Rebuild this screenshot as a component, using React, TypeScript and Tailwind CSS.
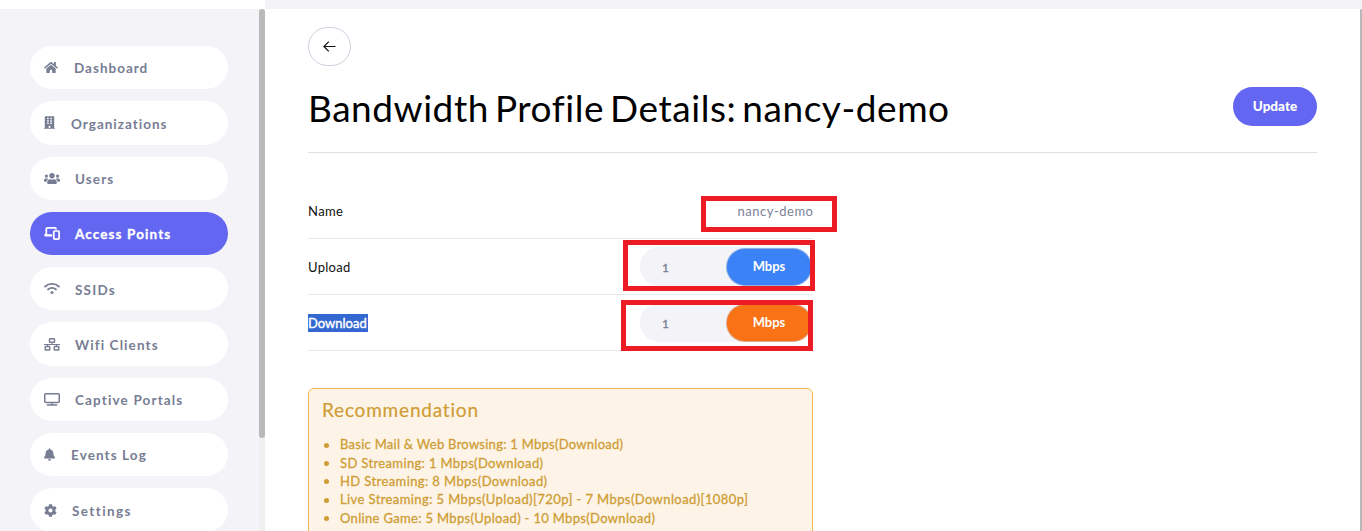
import React from "react";
import { FaHome, FaBuilding, FaUsers, FaBell, FaCog } from "react-icons/fa";

function Devices() {
  return (
    <svg width="16" height="13" viewBox="0 0 16 13" fill="none" stroke="currentColor" strokeWidth="1.800">
      <path d="M2.300 8V1.900Q2.300 .9 3.300 .9H11Q12 .9 12 1.900V2.500" />
      <path d="M0 7.300H8.200V9.600H1.600Q0 9.400 0 7.300Z" fill="currentColor" stroke="none" />
      <rect x="9.800" y="4" width="5.300" height="8.100" rx=".8" strokeWidth="1.700" />
    </svg>
  );
}

function Wifi() {
  return (
    <svg width="16" height="13" viewBox="0 0 16 13" fill="none" stroke="currentColor" strokeWidth="1.800" strokeLinecap="round">
      <path d="M1.100 4.500C4.800 .9 11.200 .9 14.900 4.500M4 7.500C6.200 5.400 9.800 5.400 12 7.500" />
      <circle cx="8" cy="10.600" r="1.500" fill="currentColor" stroke="none" />
    </svg>
  );
}

function Network() {
  return (
    <svg width="16" height="13" viewBox="0 0 16 13" fill="none" stroke="currentColor" strokeWidth="1.500">
      <rect x="5.500" y=".8" width="5" height="3.500" rx=".5" />
      <rect x="1.300" y="8.500" width="4.400" height="3.600" rx=".5" />
      <rect x="10.300" y="8.500" width="4.400" height="3.600" rx=".5" />
      <path d="M0 6.500H16M8 4.400V6.500M3.500 6.500V8.400M12.500 6.500V8.400" strokeWidth="1.100" />
    </svg>
  );
}

function Screen() {
  return (
    <svg width="16" height="13" viewBox="0 0 16 13" fill="none" stroke="currentColor" strokeWidth="1.500">
      <rect x=".75" y=".75" width="14.500" height="8.700" rx="1" />
      <path d="M3.300 11.900H12.700" strokeLinecap="round" />
      <path d="M8 9.500V12" strokeWidth="1.500" />
    </svg>
  );
}

const items = [
  { label: "Dashboard", icon: <FaHome className="h-[13px] w-[14px]" />, track: "tracking-[1px]" },
  { label: "Organizations", icon: <FaBuilding className="h-[13px] w-[11px]" />, track: "pt-[2px] tracking-[1px]" },
  { label: "Users", icon: <FaUsers className="h-[13px] w-[16px]" />, track: "-ml-px pt-px tracking-[1.1px]" },
  { label: "Access Points", icon: <Devices />, track: "-ml-px tracking-[1.1px]", active: true },
  { label: "SSIDs", icon: <Wifi />, track: "-ml-px pt-[2px] tracking-[1.2px]" },
  { label: "Wifi Clients", icon: <Network />, track: "-ml-px pt-[2px] tracking-[1.1px]" },
  { label: "Captive Portals", icon: <Screen />, track: "-ml-px pt-[2px] tracking-[1.150px]" },
  { label: "Events Log", icon: <FaBell className="h-[13px] w-[11px]" />, track: "pt-px tracking-[1.1px]" },
  { label: "Settings", icon: <FaCog className="h-[13px] w-[13px]" />, track: "-ml-px pt-[2px] tracking-[1.4px]" },
];

function Sidebar() {
  return (
    <aside className="flex w-[265px] shrink-0 justify-between bg-[#f3f3f8]">
      <nav className="flex flex-col gap-3 pt-[37px] pl-[30px]">
        {items.map((it) => (
          <a
            key={it.label}
            className={`flex h-[43.3px] w-[198px] shrink-0 items-center gap-4 rounded-full pl-[14px] text-[13.5px] font-bold ${
              it.active ? "bg-[#6366f1] text-white [-webkit-text-stroke:0.3px]" : "bg-white text-[#777d93]"
            }`}
          >
            {it.icon}
            <span className={`leading-5 ${it.track}`}>{it.label}</span>
          </a>
        ))}
      </nav>
      <div className="w-[6px] bg-[#f0f0f0]">
        <div className="h-[429px] rounded-full bg-[#b9b9b9]" />
      </div>
    </aside>
  );
}

function RateInput({ color }: { color: string }) {
  return (
    <div className="mr-px flex h-[39px] w-[172px] items-center justify-between rounded-full bg-[#f3f3f8]">
      <span className="pt-[2px] pl-[22px] text-[12px] text-[#777d93] [-webkit-text-stroke:0.3px]">1</span>
      <button className={`h-[38px] w-[86px] rounded-full border border-[#c9ccd8]/60 pt-px text-[13px] font-bold text-white ${color}`}>
        Mbps
      </button>
    </div>
  );
}

const tips = [
  { text: "Basic Mail & Web Browsing: 1 Mbps(Download)", track: "tracking-[0.270px]" },
  { text: "SD Streaming: 1 Mbps(Download)", track: "tracking-[0.360px]" },
  { text: "HD Streaming: 8 Mbps(Download)", track: "tracking-[0.4px]" },
  { text: "Live Streaming: 5 Mbps(Upload)[720p] - 7 Mbps(Download)[1080p]", track: "tracking-[0.4px]" },
  { text: "Online Game: 5 Mbps(Upload) - 10 Mbps(Download)", track: "tracking-[0.330px]" },
];

export default function App() {
  return (
    <div className="relative flex h-[531px] w-[1362px] flex-col overflow-hidden bg-white font-['Lato',sans-serif]">
      <div className="flex h-[9px] shrink-0">
        <div className="w-[265px] bg-white" />
        <div className="flex-1 bg-[#f3f3f8]" />
      </div>
      <div className="flex min-h-0 flex-1">
        <Sidebar />
        <main className="min-w-0 flex-1 pt-[18px] pr-[43px] pl-[43px]">
          <button className="flex h-[39px] w-[43px] items-center justify-center rounded-full border border-[#cdd0dc]">
            <svg width="13" height="11" viewBox="0 0 13 11" fill="none" stroke="#111" strokeWidth="1.200">
              <path d="M12.500 5.500H1M5.800 .6L.9 5.500L5.800 10.400" />
            </svg>
          </button>
          <header className="flex h-[87px] items-center justify-between border-b border-[#dddfe6]">
            <h1 className="mb-[2px] text-[37px] leading-[44px] tracking-[0.550px] text-black [word-spacing:-4px]">
              Bandwidth Profile Details: nancy-demo
            </h1>
            <button className="mb-[6px] h-[39px] w-[84px] rounded-full bg-[#6366f1] pt-px text-[13.5px] font-black text-white">Update</button>
          </header>
          <section className="mt-[30px] w-[505px] text-[13px] text-[#111]">
            <div className="flex h-14 items-center justify-between border-b border-[#e5e7eb]">
              <span className="pt-[2px] tracking-[0.4px]">Name</span>
              <span className="-mr-[0.500px] pt-[2px] tracking-[0.5px] text-[#7c8197]">nancy-demo</span>
            </div>
            <div className="flex h-14 items-center justify-between border-b border-[#e5e7eb]">
              <span className="pt-[2px] tracking-[0.3px]">Upload</span>
              <RateInput color="bg-[#3b82f6]" />
            </div>
            <div className="flex h-14 items-center justify-between border-b border-[#e5e7eb]">
              <span className="h-[18px] w-[60px] bg-[#3367d1] leading-[18px] whitespace-nowrap text-white [-webkit-text-stroke:0.4px]">
                Download
              </span>
              <RateInput color="bg-[#f97316]" />
            </div>
          </section>
          <section className="mt-[37px] h-[180px] w-[505px] rounded-md border border-[#f0b94a] bg-[#fdf4e7] px-3 pt-2 text-[#cf9d35]">
            <h2 className="pl-px text-[19px] leading-[26px] tracking-[0.8px] [-webkit-text-stroke:0.2px]">Recommendation</h2>
            <ul className="mt-[13px] text-[13px]">
              {tips.map((t) => (
                <li key={t.text} className="flex h-[18.3px] items-center">
                  <span className="mr-[11px] ml-[3px] size-[5px] rounded-full bg-[#cf9d35]" />
                  <span className={`whitespace-nowrap [-webkit-text-stroke:0.3px] ${t.track}`}>{t.text}</span>
                </li>
              ))}
            </ul>
          </section>
        </main>
        <div className="w-[2px] shrink-0 rounded-t-full bg-[#b9b9b9]" />
      </div>
      <div className="absolute top-[196px] left-[701px] h-9 w-[136px] border-5 border-[#ed1c24]" />
      <div className="absolute top-[240px] left-[623px] h-[51px] w-48 border-5 border-[#ed1c24]" />
      <div className="absolute top-[300px] left-[621px] h-[51px] w-48 border-5 border-[#ed1c24]" />
    </div>
  );
}
